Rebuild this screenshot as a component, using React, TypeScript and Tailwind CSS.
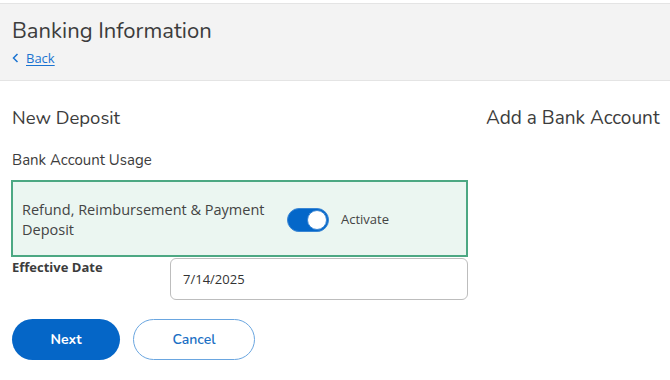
import { useState } from 'react';

const heading = { fontFamily: '"Nunito", "Open Sans", Lato, sans-serif' };
const body = { fontFamily: '"Open Sans", "Noto Sans", sans-serif' };

export default function App() {
  const [active, setActive] = useState(true);
  const [date, setDate] = useState('7/14/2025');

  return (
    <div className="h-[380px] w-[670px] overflow-hidden bg-white text-[#333]" style={body}>
      <header className="mt-[3px] h-[78px] border-y border-[#e4e4e4] bg-[#f3f3f3] px-3 pt-[14px]">
        <h1 className="text-[22px] leading-[26px] text-[#3c3c3c]" style={heading}>
          Banking Information
        </h1>
        <a href="#" className="mt-[6px] flex items-center gap-[7px] text-[13px] leading-4 text-[#1a73d1]">
          <svg width="7" height="10" viewBox="0 0 7 10" fill="none">
            <path d="M5.5 1 1.5 5l4 4" stroke="#1a73d1" strokeWidth="1.5" />
          </svg>
          <span className="underline underline-offset-2">Back</span>
        </a>
      </header>

      <div className="flex px-3 pt-[25px]">
        <div className="w-[456px] shrink-0">
          <h2 className="text-[18.5px] leading-6 text-[#3c3c3c]" style={heading}>
            New Deposit
          </h2>
          <p className="mt-[21px] text-[15px] leading-[18px] text-[#3c3c3c]" style={heading}>
            Bank Account Usage
          </p>

          <div className="-ml-px mt-[11px] flex h-[77px] items-center border-2 border-[#4ca883] bg-[#ebf6f1] pl-[9px] pt-[2px]">
            <p className="w-[260px] text-[14.5px] leading-[20px] text-[#444]">
              Refund, Reimbursement &amp; Payment Deposit
            </p>
            <button
              onClick={() => setActive(!active)}
              className={`ml-[5px] flex h-[24px] w-[42px] items-center rounded-full border border-[#3a86d4] p-[1px] ${
                active ? 'justify-end bg-[#0467c9]' : 'justify-start bg-white'
              }`}
            >
              <span className="h-[20px] w-[20px] rounded-full border border-[#3a86d4] bg-white" />
            </button>
            <span className="ml-[12px] text-[13px] text-[#444]">Activate</span>
          </div>

          <div className="flex">
            <label className="w-[158px] shrink-0 pt-[1px] text-[13px] font-bold leading-[18px] text-[#3c3c3c]">
              Effective Date
            </label>
            <input
              value={date}
              onChange={(e) => setDate(e.target.value)}
              className="mt-[1px] h-[42px] w-[298px] rounded-[6px] border border-[#bdbdbd] bg-white px-3 text-[13px] text-[#333] outline-none"
            />
          </div>

          <div className="mt-[19px] flex gap-[13px]">
            <button
              className="h-[41px] w-[108px] rounded-full bg-[#0566c7] text-[14px] font-bold text-white"
              style={heading}
            >
              Next
            </button>
            <button
              className="h-[41px] w-[122px] rounded-full border border-[#6aa6e0] bg-white text-[14px] font-semibold text-[#1a6fc4]"
              style={heading}
            >
              Cancel
            </button>
          </div>
        </div>

        <div className="ml-[18px]">
          <h2 className="whitespace-nowrap text-[19px] leading-6 text-[#3c3c3c]" style={heading}>
            Add a Bank Account
          </h2>
        </div>
      </div>
    </div>
  );
}
